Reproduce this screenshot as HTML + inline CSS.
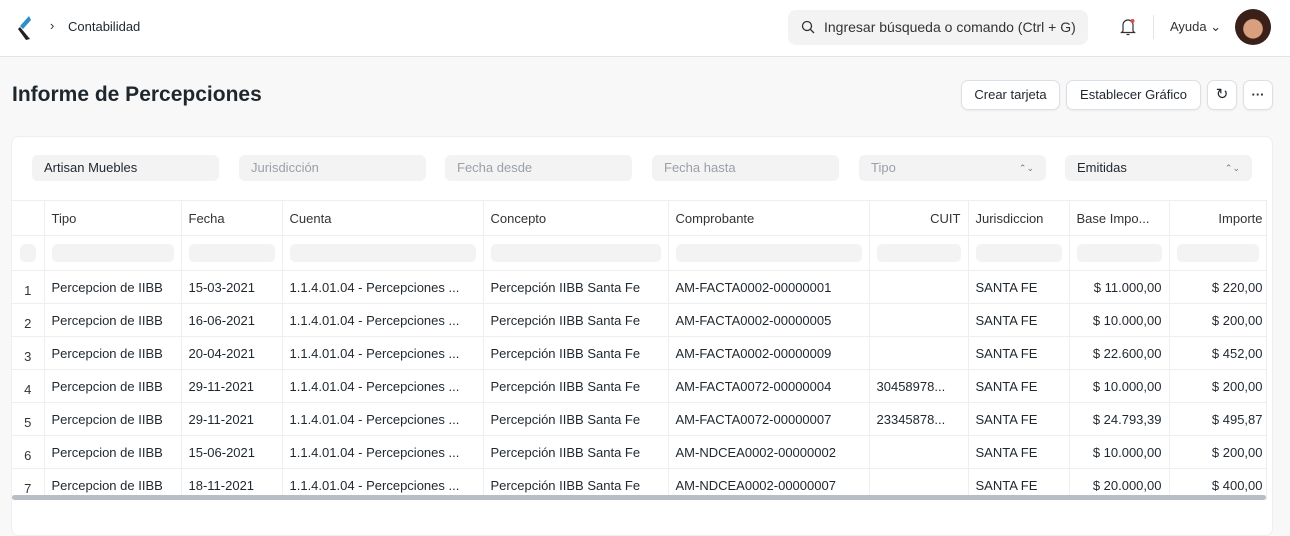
<!DOCTYPE html>
<html><head><meta charset="utf-8"><style>
*{box-sizing:border-box;margin:0;padding:0}
body{width:1290px;height:513px;overflow:hidden;background:#f8f8f8;font-family:"Liberation Sans",sans-serif;color:#1f272e;font-size:13px;position:relative}
.hdr{position:absolute;left:0;top:0;width:1290px;height:57px;background:#fff;border-bottom:1px solid #e2e4e6}
.abs{position:absolute}
.btn{position:absolute;top:80px;height:30px;background:#fff;border:1px solid #dcdfe3;border-radius:7px;font-size:13px;line-height:28px;text-align:center;box-shadow:0 1px 2px rgba(0,0,0,.05)}
.card{position:absolute;left:11px;top:136px;width:1262px;height:400px;background:#fff;border:1px solid #eceef0;border-radius:8px;overflow:hidden}
.f{position:absolute;top:18px;height:26px;width:187px;background:#f3f3f4;border-radius:6px;font-size:13px;line-height:26px;padding-left:12px;color:#9aa0a6}
.f.v{color:#1f272e}
.f .ar{position:absolute;right:12px;top:0;font-size:9px;color:#777}
table{position:absolute;left:0;top:63px;border-collapse:collapse;table-layout:fixed;width:1254px}
td{border:1px solid #edeef0;height:33px;padding:0 7px;white-space:nowrap;overflow:hidden;font-size:13px;vertical-align:middle}
tr.h td{height:35px;color:#333}
tr.fl td{height:35px;padding:0 7px}
tr.fl td div{height:18px;background:#f3f3f4;border-radius:5px}
td.n{color:#333;text-align:center;padding:6px 0 0 0}
.r{text-align:right}
td:last-child{padding-right:3px}
td:first-child{border-left:none}
</style></head><body>
<div class="hdr">
<svg class="abs" style="left:17px;top:15px" width="16" height="26" viewBox="0 0 16 26"><path d="M12 1 L3 11 L6 14 L14 5Z" fill="#2d8fc9"/><path d="M3 12 L13 24 L9 25 L1 14Z" fill="#222"/></svg>
<div class="abs" style="left:50px;top:18px;font-size:13px;color:#333">›</div>
<div class="abs" style="left:68px;top:19px;font-size:13px">Contabilidad</div>
<div class="abs" style="left:788px;top:10px;width:300px;height:35px;background:#f3f3f4;border-radius:8px"></div>
<svg class="abs" style="left:801px;top:20px" width="14" height="14" viewBox="0 0 14 14"><circle cx="6" cy="6" r="4.5" fill="none" stroke="#333" stroke-width="1.3"/><path d="M9.5 9.5L13 13" stroke="#333" stroke-width="1.3"/></svg>
<div class="abs" style="left:824px;top:19px;font-size:14px;color:#333">Ingresar búsqueda o comando (Ctrl + G)</div>
<svg class="abs" style="left:1119px;top:17px" width="18" height="20" viewBox="0 0 18 20"><path d="M4 14V8a5 5 0 0 1 10 0v6l1.5 1.5h-13Z" fill="none" stroke="#333" stroke-width="1.2"/><path d="M7.5 17.5h3" stroke="#333" stroke-width="1.2"/><circle cx="13.5" cy="4" r="2" fill="#e24c4c"/></svg>
<div class="abs" style="left:1153px;top:15px;width:1px;height:24px;background:#e2e4e6"></div>
<div class="abs" style="left:1170px;top:19px;font-size:13px;color:#333">Ayuda ⌄</div>
<div class="abs" style="left:1235px;top:9px;width:36px;height:36px;border-radius:50%;background:radial-gradient(circle at 50% 55%,#d9a080 0 35%,#3a2018 38%)"></div>
</div>
<div class="abs" style="left:12px;top:83px;font-size:21px;font-weight:bold">Informe de Percepciones</div>
<div class="btn" style="left:961px;width:99px">Crear tarjeta</div>
<div class="btn" style="left:1066px;width:135px">Establecer Gráfico</div>
<div class="btn" style="left:1207px;width:30px;font-size:15px">↻</div>
<div class="btn" style="left:1243px;width:30px;font-weight:bold">···</div>
<div class="card">
<div class="f v" style="left:20px">Artisan Muebles</div>
<div class="f" style="left:227px">Jurisdicción</div>
<div class="f" style="left:433px">Fecha desde</div>
<div class="f" style="left:640px">Fecha hasta</div>
<div class="f" style="left:847px">Tipo<span class="ar">⌃⌄</span></div>
<div class="f v" style="left:1053px">Emitidas<span class="ar">⌃⌄</span></div>
<table>
<colgroup><col style="width:32px"><col style="width:137px"><col style="width:101px"><col style="width:201px"><col style="width:185px"><col style="width:201px"><col style="width:99px"><col style="width:101px"><col style="width:100px"><col style="width:97px"></colgroup>
<tr class="h"><td></td><td>Tipo</td><td>Fecha</td><td>Cuenta</td><td>Concepto</td><td>Comprobante</td><td class="r">CUIT</td><td>Jurisdiccion</td><td>Base Impo...</td><td class="r">Importe</td></tr>
<tr class="fl"><td style="padding:0 8px"><div></div></td><td><div></div></td><td><div></div></td><td><div></div></td><td><div></div></td><td><div></div></td><td><div></div></td><td><div></div></td><td><div></div></td><td><div></div></td></tr>
<tr><td class="n">1</td><td>Percepcion de IIBB</td><td>15-03-2021</td><td>1.1.4.01.04 - Percepciones ...</td><td>Percepción IIBB Santa Fe</td><td>AM-FACTA0002-00000001</td><td></td><td>SANTA FE</td><td class="r">$ 11.000,00</td><td class="r">$ 220,00</td></tr>
<tr><td class="n">2</td><td>Percepcion de IIBB</td><td>16-06-2021</td><td>1.1.4.01.04 - Percepciones ...</td><td>Percepción IIBB Santa Fe</td><td>AM-FACTA0002-00000005</td><td></td><td>SANTA FE</td><td class="r">$ 10.000,00</td><td class="r">$ 200,00</td></tr>
<tr><td class="n">3</td><td>Percepcion de IIBB</td><td>20-04-2021</td><td>1.1.4.01.04 - Percepciones ...</td><td>Percepción IIBB Santa Fe</td><td>AM-FACTA0002-00000009</td><td></td><td>SANTA FE</td><td class="r">$ 22.600,00</td><td class="r">$ 452,00</td></tr>
<tr><td class="n">4</td><td>Percepcion de IIBB</td><td>29-11-2021</td><td>1.1.4.01.04 - Percepciones ...</td><td>Percepción IIBB Santa Fe</td><td>AM-FACTA0072-00000004</td><td>30458978...</td><td>SANTA FE</td><td class="r">$ 10.000,00</td><td class="r">$ 200,00</td></tr>
<tr><td class="n">5</td><td>Percepcion de IIBB</td><td>29-11-2021</td><td>1.1.4.01.04 - Percepciones ...</td><td>Percepción IIBB Santa Fe</td><td>AM-FACTA0072-00000007</td><td>23345878...</td><td>SANTA FE</td><td class="r">$ 24.793,39</td><td class="r">$ 495,87</td></tr>
<tr><td class="n">6</td><td>Percepcion de IIBB</td><td>15-06-2021</td><td>1.1.4.01.04 - Percepciones ...</td><td>Percepción IIBB Santa Fe</td><td>AM-NDCEA0002-00000002</td><td></td><td>SANTA FE</td><td class="r">$ 10.000,00</td><td class="r">$ 200,00</td></tr>
<tr><td class="n">7</td><td>Percepcion de IIBB</td><td>18-11-2021</td><td>1.1.4.01.04 - Percepciones ...</td><td>Percepción IIBB Santa Fe</td><td>AM-NDCEA0002-00000007</td><td></td><td>SANTA FE</td><td class="r">$ 20.000,00</td><td class="r">$ 400,00</td></tr>
</table>
<div class="abs" style="left:0;top:358px;width:1254px;height:5px;background:#b8bec5;border-radius:3px"></div>
<div class="abs" style="left:0;top:363px;width:1260px;height:40px;background:#fff"></div>
</div>
</body></html>
